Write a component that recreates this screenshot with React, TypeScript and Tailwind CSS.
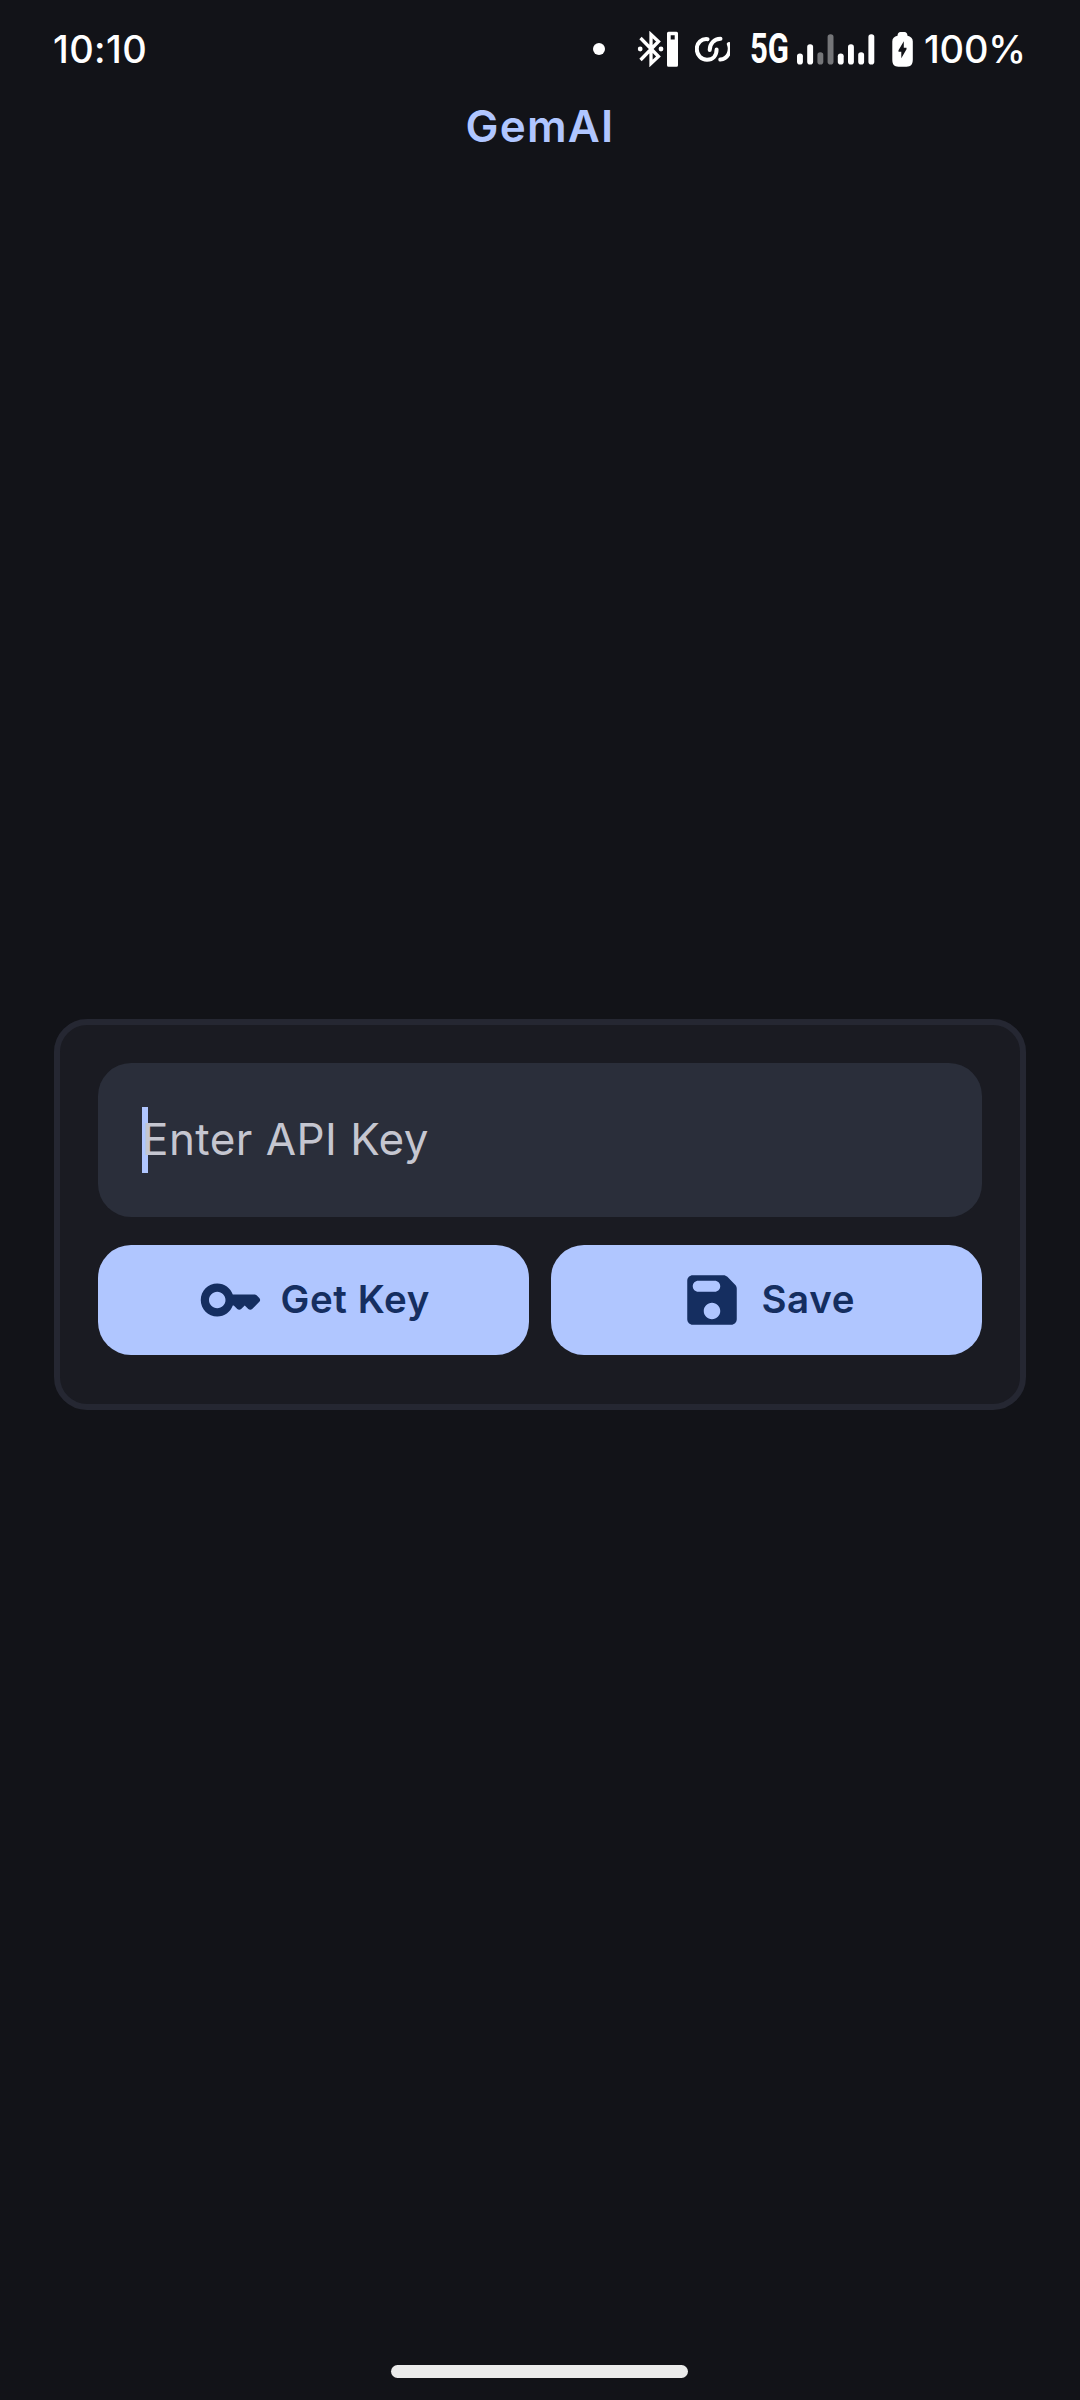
import type { ReactNode } from "react";

function BluetoothBattery() {
  return (
    <svg width="42" height="36" viewBox="0 0 42 36" fill="none" className="shrink-0">
      <path d="M3.500 7 L21.500 25.500 L14 32.500 V3.500 L21.500 10.500 L3.500 29" stroke="#fff" strokeWidth="3.300" />
      <circle cx="3.2" cy="18" r="2.4" fill="#fff" />
      <circle cx="24" cy="18" r="2.4" fill="#fff" />
      <path
        fillRule="evenodd"
        fill="#fff"
        d="M31.500 .8h8q1.500 0 1.500 1.500v31.900q0 1.500-1.500 1.500h-8q-1.500 0-1.500-1.500V2.300q0-1.500 1.500-1.500zM33.700 4.300v4.200h4v-4.200z"
      />
    </svg>
  );
}

function LinkedRings() {
  return (
    <svg width="35" height="28" viewBox="0 0 35 28" fill="none" className="shrink-0" stroke="#fff" strokeWidth="4" strokeLinecap="round">
      <path d="M12.500 4.200 C6.500 3.500 1.800 8 1.800 14 C1.800 20 6.200 24.700 12 24.700 C18 24.700 21.600 20.500 21.600 14.500" />
      <path d="M25.500 3.800 C19 4 14.700 8.500 14.700 15" />
      <path d="M33.800 9 C36.500 16 33 24 25.300 24.600" />
    </svg>
  );
}

const bars = [
  { x: 0, y: 19.5, on: true },
  { x: 10.2, y: 10.3, on: true },
  { x: 20.4, y: 18.3, on: false },
  { x: 30.6, y: 0.3, on: false },
  { x: 40.8, y: 19.5, on: true },
  { x: 51, y: 10.3, on: true },
  { x: 61.2, y: 18.3, on: true },
  { x: 71.4, y: 0.3, on: true },
];

function Signal() {
  return (
    <svg width="78" height="31" viewBox="0 0 78 31" className="shrink-0">
      {bars.map((b) => (
        <rect key={b.x} x={b.x} y={b.y} width="5.9" height={30.500 - b.y} rx="2.8" fill={b.on ? "#fff" : "#757679"} />
      ))}
    </svg>
  );
}

function Battery() {
  return (
    <svg width="21" height="35" viewBox="0 0 21 35" className="shrink-0">
      <path
        fill="#fff"
        d="M8.500 0h4c1.800 0 2.800 1.200 3 3.800 3.300.6 5.300 2.600 5.300 5.700v18c0 5-2 7.200-6.300 7.200h-8C2.200 34.700.3 32.500.3 27.500v-18c0-3.100 1.900-5.100 5.200-5.700C5.700 1.200 6.700 0 8.500 0z"
      />
      <path fill="#121318" d="M11.800 9.300 6.500 18.200v1.500h2.800v6.500l5.200-9v-1.500h-2.700z" />
    </svg>
  );
}

function KeyIcon() {
  return (
    <svg width="66" height="66" viewBox="0 0 24 24" fill="currentColor" className="shrink-0">
      <path d="M20.590 10h-7.940C11.830 7.670 9.610 6 7 6c-3.310 0-6 2.690-6 6s2.690 6 6 6c2.610 0 4.830-1.670 5.650-4H13l1.290 1.290c.39.39 1.020.39 1.410 0L17 14l1.290 1.290c.39.39 1.030.39 1.420 0l2.590-2.610c.39-.39.39-1.030-.01-1.420l-.99-.97c-.2-.19-.45-.29-.71-.29zM7 15c-1.650 0-3-1.350-3-3s1.350-3 3-3 3 1.350 3 3-1.350 3-3 3z" />
    </svg>
  );
}

function SaveIcon() {
  return (
    <svg width="66" height="66" viewBox="0 0 24 24" fill="currentColor" className="shrink-0">
      <path d="M17.590 3.590c-.38-.38-.89-.59-1.420-.59H5c-1.110 0-2 .9-2 2v14c0 1.100.9 2 2 2h14c1.100 0 2-.9 2-2V7.830c0-.53-.21-1.040-.59-1.410l-2.820-2.830zM12 19c-1.660 0-3-1.340-3-3s1.340-3 3-3 3 1.340 3 3-1.340 3-3 3zm1-10H7c-1.100 0-2-.9-2-2s.9-2 2-2h6c1.100 0 2 .9 2 2s-.9 2-2 2z" />
    </svg>
  );
}

function ActionButton({ icon, children }: { icon: ReactNode; children: ReactNode }) {
  return (
    <button className="flex h-[110px] flex-1 items-center justify-center gap-[16.500px] rounded-[33px] bg-[#b0c6ff] pl-px text-[38.500px] font-semibold tracking-[0.600px] text-[#152e60]">
      {icon}
      {children}
    </button>
  );
}

export default function App() {
  return (
    <div className="flex h-[2400px] w-[1080px] flex-col overflow-hidden bg-[#121318] font-['Inter',sans-serif]">
      <header className="flex h-[98px] shrink-0 items-center pl-[53px] pr-[55px] text-[38px] font-medium text-white">
        <span className="tracking-[0.400px]">10:10</span>
        <div className="ml-auto flex items-center">
          <span className="mr-[32px] size-[12px] rounded-full bg-white" />
          <BluetoothBattery />
          <span className="w-[16px]" />
          <LinkedRings />
          <span className="ml-[20px] w-[38px]">
            <span className="block w-max origin-left scale-x-[0.74] font-['Roboto',sans-serif] text-[42px] leading-none font-bold">5G</span>
          </span>
          <span className="w-[9px]" />
          <Signal />
          <span className="w-[17px]" />
          <Battery />
          <span className="ml-[11px] w-[101px] whitespace-nowrap tracking-[-0.200px]">100%</span>
        </div>
      </header>

      <h1 className="h-[56px] shrink-0 text-center text-[44px] leading-[56px] font-semibold tracking-[1.200px] text-[#b0c6ff]">GemAI</h1>

      <main className="mx-[54px] mt-[865px] h-[391px] rounded-[33px] border-[6px] border-[#252732] bg-[#1a1b22] px-[38px] pt-[38px]">
        <div className="flex h-[154px] items-center rounded-[33px] bg-[#2a2e3a] pl-[44px]">
          <span className="h-[66px] w-[5.500px] bg-[#b0c6ff]" />
          <span className="relative -ml-[5.500px] pb-[2px] text-[44px] leading-[66px] tracking-[0.450px] text-[#c5c6d0]">Enter API Key</span>
        </div>
        <div className="mt-[28px] flex gap-[22px]">
          <ActionButton icon={<KeyIcon />}>Get Key</ActionButton>
          <ActionButton icon={<SaveIcon />}>Save</ActionButton>
        </div>
      </main>

      <div className="mt-auto mb-[22px] ml-[391px] h-[13px] w-[297px] rounded-full bg-[#ebebeb]" />
    </div>
  );
}
